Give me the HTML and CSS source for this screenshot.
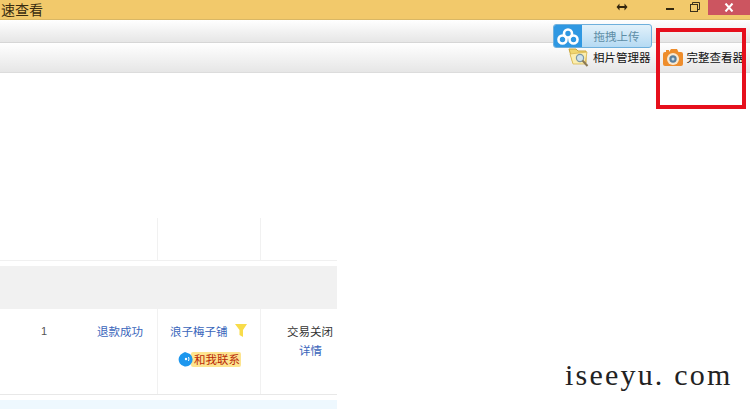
FILE: index.html
```html
<!DOCTYPE html>
<html lang="zh-CN">
<head>
    <meta charset="UTF-8">
    <meta name="viewport" content="width=device-width, initial-scale=1.0">
    <title>速查看</title>
    <link rel="stylesheet" href="styles.css">
</head>
<body>
    <header class="titlebar">
        <span class="title">速查看</span>
        <div class="win-controls">
            <svg class="win-icon resize" width="12" height="8" viewBox="0 0 12 8"><path d="M0.5 4 L3.5 0.500 V3 H8.500 V0.500 L11.500 4 L8.500 7.500 V5 H3.500 V7.500 Z" fill="#33260e"/></svg>
            <svg class="win-icon min" width="9" height="8" viewBox="0 0 9 8"><rect x="0" y="5" width="8" height="2" fill="#33280f"/></svg>
            <svg class="win-icon restore" width="10" height="10" viewBox="0 0 10 10"><path d="M2.500 2.500V0.500H9.500V7.500H7.500" fill="none" stroke="#3a2f1c"/><rect x="0.500" y="2.500" width="7" height="7" fill="none" stroke="#3a2f1c"/></svg>
            <div class="win-close">
                <svg width="10" height="9" viewBox="0 0 10 9"><path d="M1.500 0.500 L8.500 8.500 M8.500 0.500 L1.500 8.500" stroke="#fff" stroke-width="2"/></svg>
            </div>
        </div>
    </header>

    <div class="toolbar toolbar-top"></div>
    <div class="toolbar toolbar-main">
        <div class="tool">
            <svg width="22" height="21" viewBox="0 0 22 21">
                <path d="M1 2 H8 L10 4 H18 L18 16 H5 Z" fill="#f0d670" stroke="#c9a53c"/>
                <path d="M2 7 L19 5 L17 17 H5 Z" fill="#fbeeb0" stroke="#d9b850" stroke-width="0.800"/>
                <circle cx="12" cy="11" r="3.600" fill="#cfe3ee" stroke="#7d98a6" stroke-width="1.200"/>
                <path d="M14.500 13.500 L19.500 19" stroke="#8b7a55" stroke-width="2"/>
            </svg>
            <span>相片管理器</span>
        </div>
        <div class="tool">
            <svg width="22" height="19" viewBox="0 0 22 19">
                <path d="M1 6 Q1 4 3 4 H4 V2 H7 V4 L9 1 H15 L16.500 4 H19 Q21 4 21 6 V16 Q21 18 19 18 H3 Q1 18 1 16 Z" fill="#ee8d2c"/>
                <circle cx="11" cy="11" r="6" fill="#f8e9d2"/>
                <circle cx="11" cy="11" r="3.700" fill="#5b7f9c"/>
                <circle cx="11" cy="11" r="1.500" fill="#c6dbe8"/>
            </svg>
            <span>完整查看器</span>
        </div>
    </div>

    <div class="upload-btn">
        <div class="upload-logo">
            <svg width="22" height="17" viewBox="0 0 22 17" fill="none" stroke="#fff" stroke-width="2.600">
                <circle cx="11" cy="5.500" r="4"/>
                <circle cx="5.500" cy="11.500" r="4"/>
                <circle cx="16.500" cy="11.500" r="4"/>
            </svg>
        </div>
        <span class="upload-text">拖拽上传</span>
    </div>

    <div class="red-box"></div>

    <main class="content">
        <div class="orders">
            <div class="row row-empty">
                <div class="cell cell-main"></div>
                <div class="cell cell-shop"></div>
                <div class="cell cell-status"></div>
            </div>
            <div class="band"></div>
            <div class="row row-order">
                <div class="cell cell-main">
                    <span class="qty">1</span>
                    <a class="link refund">退款成功</a>
                </div>
                <div class="cell cell-shop">
                    <div class="shop-name">
                        <a class="link">浪子梅子铺</a>
                        <svg width="12" height="13" viewBox="0 0 12 13"><path d="M0 0 H12 L8 6 V13 L4.500 11 V6 Z" fill="#f8dc4a"/></svg>
                    </div>
                    <div class="contact">
                        <span class="contact-dot">
                            <svg width="16" height="16" viewBox="0 0 16 16"><path d="M8 1 L6 2 A7 7 0 1 0 13 3 Z" fill="#1d97ee"/><circle cx="9" cy="8" r="1.200" fill="#fff"/><path d="M11.500 6 Q12.500 8 11.500 10" fill="none" stroke="#fff"/></svg>
                        </span>
                        <span class="contact-text">和我联系</span>
                    </div>
                </div>
                <div class="cell cell-status">
                    <span>交易关闭</span>
                    <a class="link">详情</a>
                </div>
            </div>
            <div class="next-row"></div>
        </div>
    </main>

    <div class="watermark">iseeyu. com</div>
</body>
</html>
```

FILE: styles.css
```css
body { margin: 0; padding: 0; width: 750px; height: 409px; overflow: hidden; position: relative; background-color: #ffffff; font-family: "Noto Sans CJK SC", "Liberation Sans", sans-serif; font-size: 11.500px; color: #333; }

/* title bar */
.titlebar { height: 19px; background-color: #f2c96b; border-bottom: 1px solid #d9b765; display: flex; justify-content: space-between; align-items: flex-start; }
.title { font-size: 14px; line-height: 18px; margin-left: 1px; color: #3a2c10; }
.win-controls { display: flex; align-items: flex-start; }
.win-icon { display: block; margin-top: 2px; }
.win-icon.resize { margin-top: 3px; margin-right: 38px; }
.win-icon.min { margin-top: 3px; margin-right: 15px; }
.win-icon.restore { margin-top: 2px; margin-right: 8px; }
.win-close { width: 42px; height: 15px; background-color: #cc5560; display: flex; align-items: center; justify-content: center; }

/* toolbars */
.toolbar { background: linear-gradient(#ffffff, #e6e6e6); }
.toolbar-top { height: 22px; border-bottom: 1px solid #d6d6d6; }
.toolbar-main { height: 29px; border-bottom: 1px solid #dcdcdc; display: flex; justify-content: flex-end; align-items: flex-start; padding-right: 6px; }
.tool { display: flex; align-items: center; height: 28px; color: #111; }
.tool svg { margin-right: 3px; }
.tool:first-child { margin-right: 11px; }
.tool span { line-height: 28px; }

/* upload button sits over both toolbars */
.upload-btn { position: absolute; left: 553px; top: 24px; width: 99px; height: 24px; box-sizing: border-box; border: 1px solid #6fb0dc; border-radius: 3px; display: flex; overflow: hidden; background: linear-gradient(#e2f1fa, #b5daf3); }
.upload-logo { width: 28px; background-color: #2f98e2; display: flex; align-items: center; justify-content: center; }
.upload-text { flex: 1; text-align: center; line-height: 22px; color: #5e8ea6; }

.red-box { position: absolute; left: 656px; top: 28px; width: 82px; height: 73px; border: 4px solid #e60f1c; }

/* order list */
.content { padding-top: 145px; }
.orders { width: 337px; }
.row { display: flex; }
.row-empty { height: 42px; border-bottom: 1px solid #f0f0f0; }
.row-order { height: 85px; border-bottom: 1px solid #e8e8e8; }
.band { height: 43px; margin-top: 5px; background-color: #f1f1f1; }
.cell { box-sizing: border-box; }
.cell-main { width: 158px; border-right: 1px solid #f1f1f1; position: relative; }
.cell-shop { width: 103px; border-right: 1px solid #f1f1f1; }
.cell-status { width: 76px; }
.link { color: #3a66bb; text-decoration: none; }
.row-order .cell-main { display: flex; align-items: flex-start; padding-top: 13px; line-height: 18px; }
.qty { margin-left: 41px; width: 56px; font-family: "Liberation Sans", sans-serif; font-size: 11px; color: #555; }
.shop-name { display: flex; align-items: flex-start; padding: 13px 0 0 12px; line-height: 18px; }
.shop-name svg { margin: 2px 0 0 7px; }
.contact { display: flex; align-items: center; margin: 11px 0 0 19px; height: 16px; }
.contact-dot { display: block; width: 15px; height: 16px; margin-right: -1px; position: relative; }
.contact-text { background-color: #fde48f; color: #b92a08; line-height: 15px; padding: 0 1px 0 3px; border-radius: 2px; }
.cell-status { display: flex; flex-direction: column; align-items: flex-end; padding: 13px 4px 0 0; line-height: 19px; }
.cell-status .link { margin-right: 11px; }
.next-row { height: 9px; margin-top: 5px; background-color: #eef8fe; }

.watermark { position: absolute; left: 565px; top: 357px; font-family: "Liberation Serif", serif; font-size: 30px; letter-spacing: 2.200px; line-height: 36px; color: #222; white-space: pre; }
```
